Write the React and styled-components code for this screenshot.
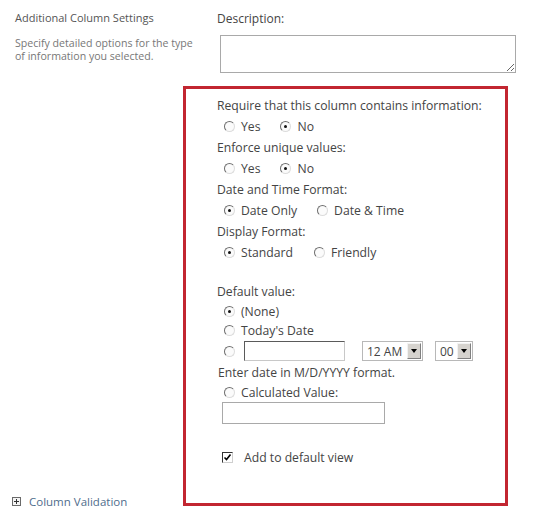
import React from 'react';
import styled, { createGlobalStyle } from 'styled-components';

const GlobalStyle = createGlobalStyle`
  html, body {
    margin: 0;
    padding: 0;
    background: #ffffff;
  }
  body {
    font-family: 'Open Sans', 'Liberation Sans', sans-serif;
    color: #444444;
  }
`;

const Page = styled.div`
  display: grid;
  grid-template-columns: 183px 334px;
  width: 535px;
  height: 525px;
  box-sizing: border-box;
  padding-top: 10px;
`;

const Side = styled.div`
  display: flex;
  flex-direction: column;
  padding-left: 15px;
  padding-bottom: 16px;
`;

const SideTitle = styled.div`
  font-size: 11px;
  line-height: 16px;
  color: #555555;
`;

const SideText = styled.div`
  margin-top: 11px;
  font-size: 10.6px;
  line-height: 13px;
  color: #777777;
  white-space: nowrap;
`;

const Expander = styled.a`
  margin-top: auto;
  display: flex;
  align-items: center;
  gap: 8px;
  font-size: 11.5px;
  color: #4f6d8c;
  text-decoration: none;
  margin-left: -3px;
`;

const PlusBox = styled.span`
  width: 7px;
  height: 7px;
  border: 1px solid #6a6a6a;
  position: relative;
  background: #f4f4f4;

  &::before,
  &::after {
    content: '';
    position: absolute;
    background: #333333;
  }
  &::before {
    left: 1px;
    right: 1px;
    top: 3px;
    height: 1px;
  }
  &::after {
    top: 1px;
    bottom: 1px;
    left: 3px;
    width: 1px;
  }
`;

const Main = styled.div`
  display: flex;
  flex-direction: column;
`;

const DescLabel = styled.label`
  font-size: 12px;
  line-height: 18px;
  margin-left: 34px;
  color: #444444;
`;

const DescArea = styled.textarea`
  margin: 7px 0 0 37px;
  width: 296px;
  height: 38px;
  box-sizing: border-box;
  border: 1px solid #a9a9a9;
  font-family: inherit;
  resize: both;
`;

const Frame = styled.div`
  margin-top: 13px;
  width: 325px;
  height: 420px;
  box-sizing: border-box;
  border: 3px solid #c22631;
  padding: 6px 0 0 31px;
  display: flex;
  flex-direction: column;
  font-size: 12.2px;
  color: #444444;
`;

const Label = styled.div`
  line-height: 21px;
  white-space: nowrap;
  margin-top: ${(p) => p.$gap ?? 0}px;
  margin-left: ${(p) => p.$indent ?? 0}px;
`;

const Options = styled.div`
  display: flex;
  align-items: center;
  height: ${(p) => p.$h ?? 21}px;
  padding-left: 7px;
  gap: ${(p) => p.$gap ?? 18}px;
  white-space: nowrap;
`;

const Option = styled.label`
  display: flex;
  align-items: center;
  gap: 6px;
`;

const Radio = styled.span`
  flex-shrink: 0;
  width: 9px;
  height: 9px;
  border-radius: 50%;
  border: 1px solid;
  border-color: #6e6e6e #dcdcdc #dcdcdc #6e6e6e;
  background: #fbfbfb;
  display: flex;
  align-items: center;
  justify-content: center;

  &::after {
    content: '';
    width: 3px;
    height: 3px;
    border-radius: 50%;
    background: ${(p) => (p.$on ? '#111111' : 'transparent')};
  }
`;

const Field = styled.span`
  flex-shrink: 0;
  display: inline-block;
  box-sizing: border-box;
  width: ${(p) => p.$w}px;
  height: ${(p) => p.$h ?? 20}px;
  border: 1px solid;
  border-color: ${(p) =>
    p.$inset ? '#5a5a5a #c8c8c8 #c8c8c8 #5a5a5a' : '#a9a9a9'};
  background: #ffffff;
  margin-left: ${(p) => p.$ml ?? 0}px;
`;

const Select = styled.span`
  flex-shrink: 0;
  display: inline-flex;
  align-items: center;
  justify-content: space-between;
  box-sizing: border-box;
  width: ${(p) => p.$w}px;
  height: 20px;
  border: 1px solid #b8b8b8;
  margin-left: ${(p) => p.$ml}px;
  padding: 1px 1px 1px 4px;
  font-size: 12px;
  color: #444444;
  white-space: nowrap;
`;

const Arrow = styled.span`
  flex-shrink: 0;
  width: 14px;
  height: 16px;
  box-sizing: border-box;
  background: #d6d3ce;
  border: 1px solid;
  border-color: #f2f2f2 #808080 #808080 #f2f2f2;
  display: flex;
  align-items: center;
  justify-content: center;

  &::after {
    content: '';
    border-left: 3.5px solid transparent;
    border-right: 3.5px solid transparent;
    border-top: 4px solid #000000;
  }
`;

const Check = styled.span`
  width: 11px;
  height: 11px;
  box-sizing: border-box;
  border: 1px solid;
  border-color: #333333 #cfcfcf #cfcfcf #333333;
  background: #ffffff;
  display: flex;
  align-items: center;
  justify-content: center;
`;

const CheckRow = styled.label`
  display: flex;
  align-items: center;
  gap: 11px;
  margin: 23px 0 0 5px;
  line-height: 21px;
`;

function RadioGroup({ items, checked, gap, h }) {
  return (
    <Options $gap={gap} $h={h}>
      {items.map((it) => (
        <Option key={it}>
          <Radio $on={it === checked} />
          {it}
        </Option>
      ))}
    </Options>
  );
}

export default function App() {
  return (
    <>
      <GlobalStyle />
      <Page>
        <Side>
          <SideTitle>Additional Column Settings</SideTitle>
          <SideText>
            Specify detailed options for the type
            <br />
            of information you selected.
          </SideText>
          <Expander href="#">
            <PlusBox />
            Column Validation
          </Expander>
        </Side>
        <Main>
          <DescLabel>Description:</DescLabel>
          <DescArea />
          <Frame>
            <Label>Require that this column contains information:</Label>
            <RadioGroup items={['Yes', 'No']} checked="No" gap={20} />
            <Label>Enforce unique values:</Label>
            <RadioGroup items={['Yes', 'No']} checked="No" gap={20} />
            <Label>Date and Time Format:</Label>
            <RadioGroup items={['Date Only', 'Date & Time']} checked="Date Only" gap={20} />
            <Label>Display Format:</Label>
            <RadioGroup items={['Standard', 'Friendly']} checked="Standard" gap={21} />
            <Label $gap={18}>Default value:</Label>
            <RadioGroup items={['(None)']} checked="(None)" h={19} />
            <RadioGroup items={["Today's Date"]} h={19} />
            <Options $h={22} $gap={0}>
              <Radio />
              <Field $w={101} $ml={9} $inset />
              <Select $w={61} $ml={17}>
                12 AM
                <Arrow />
              </Select>
              <Select $w={38} $ml={12}>
                00
                <Arrow />
              </Select>
            </Options>
            <Label $indent={1}>Enter date in M/D/YYYY format.</Label>
            <RadioGroup items={['Calculated Value:']} h={19} />
            <Field $w={163} $h={22} $ml={5} />
            <CheckRow>
              <Check>
                <svg width="9" height="9" viewBox="0 0 9 9">
                  <path d="M1.5 4.5 L3.5 6.5 L7.5 1.5" fill="none" stroke="#000" strokeWidth="1.6" />
                </svg>
              </Check>
              Add to default view
            </CheckRow>
          </Frame>
        </Main>
      </Page>
    </>
  );
}
